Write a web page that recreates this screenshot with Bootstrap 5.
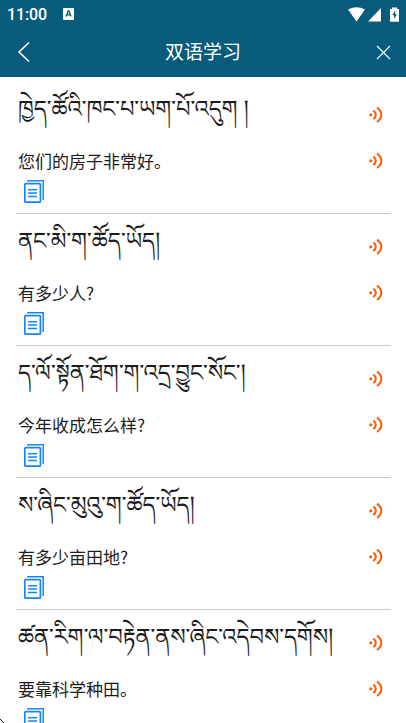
<!DOCTYPE html>
<html lang="zh-CN">
<head>
<meta charset="utf-8">
<meta name="viewport" content="width=device-width, initial-scale=1">
<title>双语学习</title>
<link href="https://cdn.jsdelivr.net/npm/bootstrap@5.3.0/dist/css/bootstrap.min.css" rel="stylesheet">
<style>
body{height:723px;overflow:hidden;background:#fff;color:#1c1c1c;font-family:Roboto,"Noto Sans CJK SC",sans-serif}
.app-header{background:#085b7b;height:77px;color:#fff}
.status-bar{height:28px;padding:0 7px 0 7px}
.clock{font:500 16px/28px Roboto,sans-serif;letter-spacing:-.15px;padding-top:1px}
.title-bar{height:48px;padding:0 15px 0 17px}
.title-bar h1{font:400 19px/48px "Noto Sans CJK SC",sans-serif;margin:-3px 1px 0 0}
.phrases{margin:5px 15px 0 16px}
.phrase{height:132px;padding:0 2px;border-bottom:1px solid #cbcbcb}
.bo-row{height:65px}
.bo{font-family:"Noto Serif Tibetan","Noto Sans Tibetan","Microsoft Himalaya","Jomolhari",serif;font-size:24px;line-height:60px;transform:scaleX(.938);transform-origin:0 50%;margin-top:3px}
.zh-row{height:27px}
.zh{font:400 17px/25px "Noto Sans CJK SC",sans-serif}
.sound{margin-right:6px}
.copy{margin:6px 0 0 6px}
.pointer-edge{left:0;bottom:0}
svg{display:block;flex:none}
</style>
</head>
<body>
<svg width="0" height="0" class="position-absolute" aria-hidden="true">
<symbol id="sound" viewBox="0 0 14 16"><circle cx="1.8" cy="7.8" r="1.6" fill="#ff5a00"/><path d="M4.2 3.6C7.7 5.8 7.7 9.8 4.2 12M8 .6C13.7 4.5 13.7 11.1 8 15" fill="none" stroke="#ff5a00" stroke-width="2"/></symbol>
<symbol id="copy" viewBox="0 0 20 23"><path d="M3 .8H19.2V20M4 9.7H13M4 13H13M4 16.5H13" fill="none" stroke="#1684ff" stroke-width="1.5"/><rect x=".8" y="3.6" width="15.6" height="18.6" rx="1" fill="none" stroke="#1684ff" stroke-width="1.7"/></symbol>
</svg>
<header class="app-header">
<div class="status-bar d-flex align-items-center">
<span class="clock">11:00</span>
<svg class="ms-3" width="11" height="12" viewBox="0 0 11 12"><rect width="11" height="12" rx="1" fill="#fff"/><path d="M3 8.5 5.2 3h.7L8 8.5M4 6.8h3" fill="none" stroke="#085b7b" stroke-width="1.3"/></svg>
<svg class="ms-auto" width="51" height="15" viewBox="0 0 51 15" fill="#fff"><path d="M0 2.6Q8.5-1.9 17 2.6L8.5 14.5ZM20 14.5 33 1V14.5Z"/><path d="M42 2h2V.5h5V2h2v12.7h-9Z"/><path d="M47.2 3.5 44.3 8.3h1.8V12l2.8-4.7h-1.7Z" fill="#085b7b"/></svg>
</div>
<div class="title-bar d-flex align-items-center justify-content-between">
<svg width="14" height="20" viewBox="0 0 14 20"><path d="M12 .5 2 10 12 19.5" fill="none" stroke="#fff" stroke-width="1.6"/></svg>
<h1>双语学习</h1>
<svg width="15" height="15" viewBox="0 0 15 15"><path d="M1 1 14 14M14 1 1 14" fill="none" stroke="#fff" stroke-width="1.1"/></svg>
</div>
</header>
<main class="phrases">
<section class="phrase"><div class="bo-row d-flex align-items-center justify-content-between"><div class="bo text-nowrap" lang="bo">ཁྱེད་ཚོའི་ཁང་པ་ཡག་པོ་འདུག །</div><svg class="sound" width="14" height="16"><use href="#sound"/></svg></div><div class="zh-row d-flex align-items-center justify-content-between"><div class="zh">您们的房子非常好。</div><svg class="sound" width="14" height="16"><use href="#sound"/></svg></div><svg class="copy" width="20" height="23"><use href="#copy"/></svg></section>
<section class="phrase"><div class="bo-row d-flex align-items-center justify-content-between"><div class="bo text-nowrap" lang="bo">ནང་མི་ག་ཚོད་ཡོད།</div><svg class="sound" width="14" height="16"><use href="#sound"/></svg></div><div class="zh-row d-flex align-items-center justify-content-between"><div class="zh">有多少人?</div><svg class="sound" width="14" height="16"><use href="#sound"/></svg></div><svg class="copy" width="20" height="23"><use href="#copy"/></svg></section>
<section class="phrase"><div class="bo-row d-flex align-items-center justify-content-between"><div class="bo text-nowrap" lang="bo">ད་ལོ་སྟོན་ཐོག་ག་འདྲ་བྱུང་སོང་།</div><svg class="sound" width="14" height="16"><use href="#sound"/></svg></div><div class="zh-row d-flex align-items-center justify-content-between"><div class="zh">今年收成怎么样?</div><svg class="sound" width="14" height="16"><use href="#sound"/></svg></div><svg class="copy" width="20" height="23"><use href="#copy"/></svg></section>
<section class="phrase"><div class="bo-row d-flex align-items-center justify-content-between"><div class="bo text-nowrap" lang="bo">ས་ཞིང་མུའུ་ག་ཚོད་ཡོད།</div><svg class="sound" width="14" height="16"><use href="#sound"/></svg></div><div class="zh-row d-flex align-items-center justify-content-between"><div class="zh">有多少亩田地?</div><svg class="sound" width="14" height="16"><use href="#sound"/></svg></div><svg class="copy" width="20" height="23"><use href="#copy"/></svg></section>
<section class="phrase"><div class="bo-row d-flex align-items-center justify-content-between"><div class="bo text-nowrap" lang="bo">ཚན་རིག་ལ་བརྟེན་ནས་ཞིང་འདེབས་དགོས།</div><svg class="sound" width="14" height="16"><use href="#sound"/></svg></div><div class="zh-row d-flex align-items-center justify-content-between"><div class="zh">要靠科学种田。</div><svg class="sound" width="14" height="16"><use href="#sound"/></svg></div><svg class="copy" width="20" height="23"><use href="#copy"/></svg></section>
</main>
<svg class="pointer-edge position-absolute" width="5" height="5" viewBox="0 0 5 5" aria-hidden="true"><path d="M0 1h1v1H0ZM1 2h1v1H1ZM2 3h1v1H2ZM3 4h1v1H3Z" fill="#111"/></svg>
<script src="https://cdn.jsdelivr.net/npm/bootstrap@5.3.0/dist/js/bootstrap.bundle.min.js"></script>
</body>
</html>
